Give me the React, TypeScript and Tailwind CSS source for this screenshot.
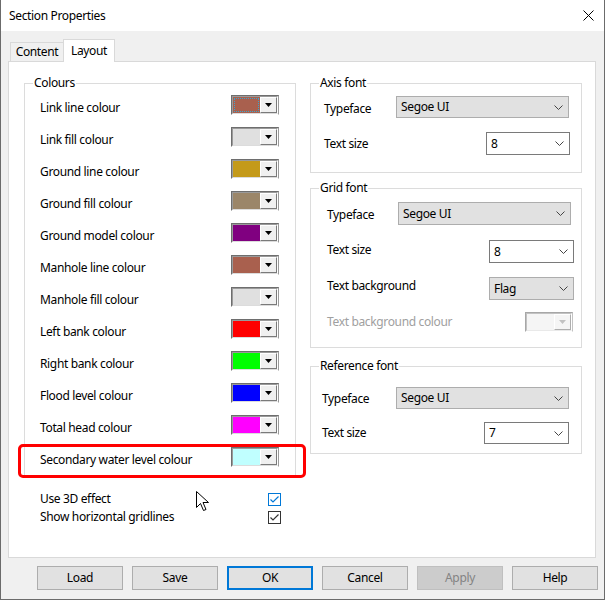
const colourRows = [
  { label: 'Link line colour', color: '#a9604e', focus: true },
  { label: 'Link fill colour', color: '#e0e0e0' },
  { label: 'Ground line colour', color: '#c49a1a' },
  { label: 'Ground fill colour', color: '#9b8669' },
  { label: 'Ground model colour', color: '#800080' },
  { label: 'Manhole line colour', color: '#a9604e' },
  { label: 'Manhole fill colour', color: '#e0e0e0' },
  { label: 'Left bank colour', color: '#ff0000' },
  { label: 'Right bank colour', color: '#00ff00' },
  { label: 'Flood level colour', color: '#0000ff' },
  { label: 'Total head colour', color: '#ff00ff' },
  { label: 'Secondary water level colour', color: '#c0ffff' },
]

function ColourPicker({ color, focus, disabled }: { color: string, focus?: boolean, disabled?: boolean }) {
  return (
    <div className={`flex h-[20px] w-[48px] border border-t-[#6e6e6e] border-l-[#6e6e6e] border-r-[#9a9a9a] border-b-white ${disabled ? 'opacity-60' : ''}`}>
      <div className="flex flex-1 border border-t-[#9a9a9a] border-l-[#9a9a9a] border-r-white border-b-[#dcdcdc]">
        <div className="flex-1 p-px" style={{ backgroundColor: color }}>
          {focus && <div className="h-full w-full border border-dotted border-[#3aa6d0]" />}
        </div>
        <div className="flex w-[17px] items-center justify-center border border-t-white border-l-white border-r-[#7a7a7a] border-b-[#7a7a7a] bg-[#f0f0f0]">
          <svg width="7" height="4" viewBox="0 0 7 4"><path d="M0 0h7L3.5 4z" fill={disabled ? '#9a9a9a' : '#000'} /></svg>
        </div>
      </div>
    </div>
  )
}

function Select({ value, width, height = 23, gray }: { value: string, width: number, height?: number, gray?: boolean }) {
  return (
    <div
      className={`flex items-center justify-between pl-[4px] pr-[5px] border ${gray ? 'bg-[#e1e1e1] border-[#adadad]' : 'bg-white border-[#7a7a7a]'}`}
      style={{ width, height }}
    >
      <span className="leading-none">{value}</span>
      <svg width="9" height="5" viewBox="0 0 9 5"><path d="M0.5 0.5l4 4 4-4" fill="none" stroke="#444" strokeWidth="1" /></svg>
    </div>
  )
}

function Checkbox({ blue }: { blue?: boolean }) {
  return (
    <div className={`flex h-[13px] w-[13px] items-center justify-center border bg-white ${blue ? 'border-[#0078d7]' : 'border-[#333]'}`}>
      <svg width="9" height="7" viewBox="0 0 9 7"><path d="M0.5 3.5l2.5 2.5 5.5-5.5" fill="none" stroke={blue ? '#0078d7' : '#333'} strokeWidth="1.2" /></svg>
    </div>
  )
}

function Group({ title, children, className }: { title: string, children: React.ReactNode, className?: string }) {
  return (
    <fieldset className={`border border-[#dcdcdc] w-[272px] ${className ?? ''}`}>
      <legend className="ml-[8px] px-px leading-[16px]">{title}</legend>
      {children}
    </fieldset>
  )
}

function Button({ label, primary, disabled }: { label: string, primary?: boolean, disabled?: boolean }) {
  return (
    <div
      className={`flex h-[24px] w-[86px] items-center justify-center ${primary ? 'border-2 border-[#0078d7] bg-[#e1e1e1]' : disabled ? 'border border-[#bfbfbf] bg-[#cccccc] text-[#838383]' : 'border border-[#adadad] bg-[#e1e1e1]'}`}
    >
      {label}
    </div>
  )
}

export default function App() {
  return (
    <div className="relative h-[600px] w-[605px] border-x border-b border-[#6b6b6b] bg-[#f0f0f0] font-['Noto_Sans',sans-serif] text-[12px] tracking-[-0.35px] text-black">
      <div className="flex h-[31px] items-center justify-between bg-white pl-[8px] pr-[10px]">
        <span>Section Properties</span>
        <svg width="11" height="11" viewBox="0 0 11 11"><path d="M0.5 0.5l10 10M10.5 0.5l-10 10" stroke="#000" strokeWidth="1" /></svg>
      </div>

      <div className="flex h-[30px] items-end pl-[9px]">
        <div className="flex h-[19px] w-[54px] items-center justify-center border border-b-0 border-[#d9d9d9]">Content</div>
        <div className="relative z-10 -mb-px -ml-px flex h-[23px] w-[52px] items-start justify-center border border-b-0 border-[#d9d9d9] bg-white pt-[2px]">Layout</div>
      </div>

      <div className="relative ml-[7px] h-[497px] w-[588px] border border-[#d9d9d9] bg-white pt-[13px]">
        <div className="flex gap-[14px] pl-[15px]">
          <div>
            <Group title="Colours">
              {colourRows.map((r) => (
                <div key={r.label} className="flex h-[32px] items-start justify-between pl-[15px] pr-[16px]">
                  <span className="mt-[9px] leading-[16px]">{r.label}</span>
                  <div className="mt-[4px]"><ColourPicker color={r.color} focus={r.focus} /></div>
                </div>
              ))}
            </Group>
            <div className="mt-[14px] w-[257px] pl-[16px]">
              <div className="flex h-[18px] items-center justify-between">
                <span>Use 3D effect</span>
                <Checkbox blue />
              </div>
              <div className="flex h-[18px] items-center justify-between">
                <span>Show horizontal gridlines</span>
                <Checkbox />
              </div>
            </div>
          </div>

          <div className="flex flex-col">
            <Group title="Axis font" className="pb-[17px]">
              <div className="mt-[5px] flex items-center justify-between pl-[13px] pr-[12px]">
                <span className="mt-[3px]">Typeface</span>
                <Select value="Segoe UI" width={173} height={22} gray />
              </div>
              <div className="mt-[14px] flex items-center justify-between pl-[13px] pr-[11px]">
                <span>Text size</span>
                <Select value="8" width={84} />
              </div>
            </Group>

            <Group title="Grid font" className="mt-[7px] pb-[15px]">
              <div className="mt-[6px] flex items-center justify-between pl-[16px] pr-[10px]">
                <span className="mt-[2px]">Typeface</span>
                <Select value="Segoe UI" width={173} gray />
              </div>
              <div className="mt-[15px] flex items-center justify-between pl-[16px] pr-[7px]">
                <span className="-mt-[3px]">Text size</span>
                <Select value="8" width={85} />
              </div>
              <div className="mt-[14px] flex items-center justify-between pl-[16px] pr-[7px]">
                <span className="-mt-[5px]">Text background</span>
                <Select value="Flag" width={85} gray />
              </div>
              <div className="mt-[12px] flex items-center justify-between pl-[16px] pr-[8px]">
                <span className="text-[#a0a0a0]">Text background colour</span>
                <ColourPicker color="#f0f0f0" disabled />
              </div>
            </Group>

            <Group title="Reference font" className="mt-[10px] pb-[9px]">
              <div className="mt-[13px] flex items-center justify-between pl-[11px] pr-[12px]">
                <span className="mt-[2px]">Typeface</span>
                <Select value="Segoe UI" width={173} height={22} gray />
              </div>
              <div className="mt-[13px] flex items-center justify-between pl-[11px] pr-[12px]">
                <span>Text size</span>
                <Select value="7" width={85} height={22} />
              </div>
            </Group>
          </div>
        </div>

        <div className="absolute left-[9px] top-[382px] h-[34px] w-[288px] rounded-[5px] border-[3px] border-[#ff0000]" />
      </div>

      <div className="mt-[8px] flex gap-[9px] pl-[36px]">
        <Button label="Load" />
        <Button label="Save" />
        <Button label="OK" primary />
        <Button label="Cancel" />
        <Button label="Apply" disabled />
        <Button label="Help" />
      </div>

      <svg className="absolute left-[195px] top-[491px]" width="13" height="21" viewBox="0 0 13 21">
        <path d="M0.5 0.5v16l4-4 3 7 2.5-1-3-7h5.5z" fill="#fff" stroke="#000" strokeWidth="1" strokeLinejoin="round" />
      </svg>
    </div>
  )
}
